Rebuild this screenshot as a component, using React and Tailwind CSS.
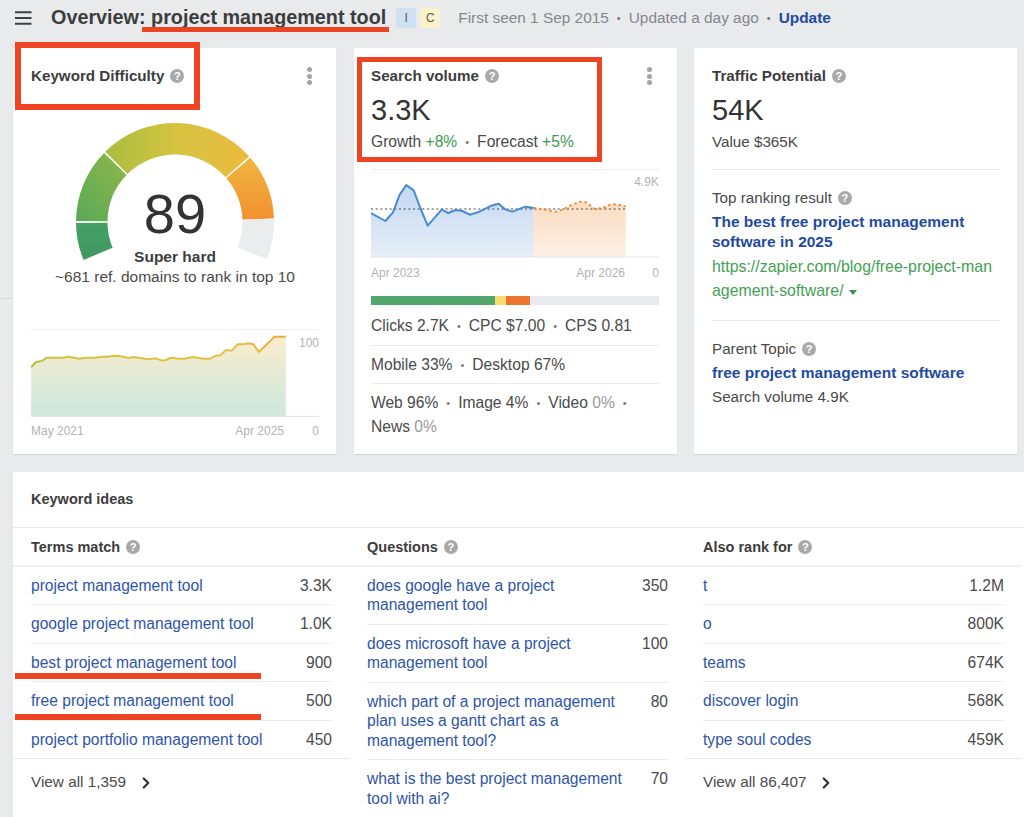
import React from 'react'
import { ChevronRight } from 'lucide-react'

// --- small bits ---

const Help = () => (
  <span className="inline-flex w-[14px] h-[14px] rounded-full bg-[#a9a9a9] text-white text-[11px] font-bold items-center justify-center leading-none shrink-0">?</span>
)

const Dots = () => (
  <div className="flex flex-col gap-[1.5px] mr-[7px]">
    <div className="w-[5px] h-[5px] rounded-full bg-[#a3a3a3]" />
    <div className="w-[5px] h-[5px] rounded-full bg-[#a3a3a3]" />
    <div className="w-[5px] h-[5px] rounded-full bg-[#a3a3a3]" />
  </div>
)

const Sep = () => <span className="mx-[8px] text-[#777] text-[11px] align-[1px]">•</span>

const Title = ({ children, menu }) => (
  <div className="flex items-center justify-between h-5">
    <div className="flex items-center gap-[6px] text-[15.2px] font-bold text-[#3d3d3d]">
      {children}
      <Help />
    </div>
    {menu && <Dots />}
  </div>
)

// --- gauge ---

const polar = (r, deg) => {
  const a = (deg * Math.PI) / 180
  return [100 + r * Math.cos(a), 103 - r * Math.sin(a)]
}

const arc = (from, to, R = 99, r = 67.5) => {
  const [x1, y1] = polar(R, from)
  const [x2, y2] = polar(R, to)
  const [x3, y3] = polar(r, to)
  const [x4, y4] = polar(r, from)
  return `M${x1} ${y1} A${R} ${R} 0 0 1 ${x2} ${y2} L${x3} ${y3} A${r} ${r} 0 0 0 ${x4} ${y4} Z`
}

const Gauge = () => (
  <svg width="200" height="150" viewBox="0 0 200 150" className="block">
    <defs>
      <linearGradient id="g1" x1="0" y1="1" x2="0" y2="0">
        <stop offset="0" stopColor="#3f9a62" />
        <stop offset="1" stopColor="#44a063" />
      </linearGradient>
      <linearGradient id="g2" x1="0" y1="1" x2="1" y2="0">
        <stop offset="0" stopColor="#5aa957" />
        <stop offset="1" stopColor="#8fb74a" />
      </linearGradient>
      <linearGradient id="g3" x1="0" y1="0" x2="1" y2="0">
        <stop offset="0" stopColor="#a9bd3f" />
        <stop offset="0.5" stopColor="#d6c440" />
        <stop offset="1" stopColor="#ecbb40" />
      </linearGradient>
      <linearGradient id="g4" x1="0" y1="0" x2="0" y2="1">
        <stop offset="0" stopColor="#efb53f" />
        <stop offset="1" stopColor="#f29130" />
      </linearGradient>
    </defs>
    <path d={arc(202.5, 180.6)} fill="url(#g1)" />
    <path d={arc(179.4, 135.8)} fill="url(#g2)" />
    <path d={arc(134.8, 41.5)} fill="url(#g3)" />
    <path d={arc(40.5, 2)} fill="url(#g4)" />
    <path d={arc(2, -22)} fill="#ebecee" />
  </svg>
)

// --- charts ---

const kdPoints = '93,229 108,214 125,211 140,201 190,201 205,198 238,204 255,201 285,201 305,198 325,198 340,195 358,196 385,202 400,199 445,206 467,203 485,210 497,208 513,201 535,204 552,204 578,199 610,204 630,204 645,196 660,194 678,178 695,180 712,161 730,161 745,158 760,161 776,184 823,138 857,138'

const KdChart = () => (
  <svg width="288" height="88" viewBox="93 115 863 264" className="block">
    <defs>
      <linearGradient id="kdArea" x1="0" y1="0" x2="0" y2="1">
        <stop offset="0" stopColor="#fbedcc" />
        <stop offset="0.85" stopColor="#d2e8dc" />
        <stop offset="1" stopColor="#d2e8dc" />
      </linearGradient>
      <linearGradient id="kdLine" gradientUnits="userSpaceOnUse" x1="93" y1="0" x2="857" y2="0">
        <stop offset="0" stopColor="#aebd3e" />
        <stop offset="0.1" stopColor="#d5c240" />
        <stop offset="0.8" stopColor="#e6c03f" />
        <stop offset="1" stopColor="#f3aa3c" />
      </linearGradient>
    </defs>
    <line x1="93" y1="116" x2="956" y2="116" stroke="#ececec" strokeWidth="3" />
    <polygon points={`${kdPoints} 857,377 93,377`} fill="url(#kdArea)" />
    <line x1="93" y1="377" x2="956" y2="377" stroke="#dfe3e2" strokeWidth="3" />
    <polyline points={kdPoints} fill="none" stroke="url(#kdLine)" strokeWidth="6" strokeLinejoin="round" />
  </svg>
)

const volPoints = '64,640 107,664 130,638 150,585 170,556 192,572 212,625 234,678 276,630 296,640 318,631 338,634 360,645 385,638 425,618 447,612 468,630 488,636 527,621 552,625'
const forecastPoints = '552,625 590,630 615,637 640,630 665,616 690,606 710,608 735,628 760,625 780,615 800,614 828,620'

const VolChart = () => (
  <svg width="288" height="89" viewBox="64 508 864 267" className="block">
    <defs>
      <linearGradient id="volArea" x1="0" y1="0" x2="0" y2="1">
        <stop offset="0" stopColor="#c3d7f0" />
        <stop offset="1" stopColor="#e6eff9" />
      </linearGradient>
      <linearGradient id="foreArea" x1="0" y1="0" x2="0" y2="1">
        <stop offset="0" stopColor="#fbdcc0" />
        <stop offset="1" stopColor="#fdf0e5" />
      </linearGradient>
    </defs>
    <line x1="64" y1="509" x2="928" y2="509" stroke="#ececec" strokeWidth="3" />
    <polygon points={`${volPoints} 552,772 64,772`} fill="url(#volArea)" />
    <polygon points={`${forecastPoints} 828,772 552,772`} fill="url(#foreArea)" />
    <line x1="64" y1="772" x2="928" y2="772" stroke="#dfe3ea" strokeWidth="3" />
    <line x1="64" y1="628" x2="828" y2="628" stroke="#444" strokeWidth="3" strokeDasharray="6 8" />
    <polyline points={volPoints} fill="none" stroke="#4a8ad4" strokeWidth="6" strokeLinejoin="round" />
    <polyline points={forecastPoints} fill="none" stroke="#f0923a" strokeWidth="6" strokeDasharray="8 8" />
  </svg>
)

// --- top cards ---

const DifficultyCard = () => (
  <div className="w-[323px] h-[406px] bg-white shadow-[0_1px_1px_rgba(0,0,0,0.08)] pl-[18px] pr-[17px] pt-[18px] relative">
    <Title menu>Keyword Difficulty</Title>
    <div className="relative h-[175px] mt-[33px] flex justify-center">
      <Gauge />
      <div className="absolute inset-x-0 top-[58px] text-center text-[56px] leading-[74px] text-[#333]">89</div>
      <div className="absolute inset-x-0 top-[128px] text-center text-[15.5px] leading-5 font-bold text-[#3d3d3d]">Super hard</div>
      <div className="absolute inset-x-0 top-[148px] text-center text-[15.5px] leading-5 text-[#4a4a4a]">~681 ref. domains to rank in top 10</div>
    </div>
    <div className="relative mt-[35px]">
      <KdChart />
      <span className="absolute right-0 top-[6px] text-[12px] leading-4 text-[#b3b3b3]">100</span>
    </div>
    <div className="flex justify-between text-[12px] leading-4 text-[#b3b3b3] mt-[6px]">
      <div className="flex justify-between w-[253px]">
        <span>May 2021</span>
        <span>Apr 2025</span>
      </div>
      <span>0</span>
    </div>
  </div>
)

const VolumeCard = () => (
  <div className="w-[323px] h-[406px] bg-white shadow-[0_1px_1px_rgba(0,0,0,0.08)] pl-[17px] pr-[18px] pt-[18px] relative text-[15.6px] text-[#4a4a4a]">
    <Title menu>Search volume</Title>
    <div className="text-[29px] leading-9 text-[#333] mt-[6px]">3.3K</div>
    <div className="leading-5 mt-[4px]">
      Growth <span className="text-[#3f9a55]">+8%</span><Sep />Forecast <span className="text-[#3f9a55]">+5%</span>
    </div>
    <div className="relative mt-[17px]">
      <VolChart />
      <span className="absolute right-0 top-[5px] text-[12px] leading-4 text-[#b3b3b3]">4.9K</span>
    </div>
    <div className="flex justify-between text-[12px] leading-4 text-[#b3b3b3] mt-[7px]">
      <div className="flex justify-between w-[254px]">
        <span>Apr 2023</span>
        <span>Apr 2026</span>
      </div>
      <span>0</span>
    </div>
    <div className="flex h-[9px] mt-[15px] bg-[#e9eaec]">
      <div className="w-[124px] bg-[#52a66c]" />
      <div className="w-[11px] bg-[#f6dd72]" />
      <div className="w-[24px] bg-[#ec7530]" />
    </div>
    <div className="leading-5 mt-[11px] pb-[9px] border-b border-[#ebebeb]">
      Clicks 2.7K<Sep />CPC $7.00<Sep />CPS 0.81
    </div>
    <div className="leading-5 pt-[9px] pb-[8px] border-b border-[#ebebeb]">
      Mobile 33%<Sep />Desktop 67%
    </div>
    <div className="leading-6 pt-[7px]">
      Web 96%<Sep />Image 4%<Sep />Video <span className="text-[#999]">0%</span><Sep /><br />
      News <span className="text-[#999]">0%</span>
    </div>
  </div>
)

const PotentialCard = () => (
  <div className="w-[323px] h-[406px] bg-white shadow-[0_1px_1px_rgba(0,0,0,0.08)] pl-[18px] pr-[17px] pt-[18px] text-[15.2px] text-[#4a4a4a]">
    <Title>Traffic Potential</Title>
    <div className="text-[29px] leading-9 text-[#333] mt-[6px]">54K</div>
    <div className="leading-5 mt-[4px] pb-[17px] border-b border-[#ebebeb]">Value $365K</div>
    <div className="flex items-center gap-[6px] leading-5 mt-[18px]">Top ranking result <Help /></div>
    <div className="text-[15.5px] font-bold text-[#1f4ba0] leading-[19.5px] mt-[4px]">The best free project management software in 2025</div>
    <div className="text-[15.9px] leading-6 mt-[4px] pb-[17px] text-[#45a056] border-b border-[#ebebeb] whitespace-nowrap">
      https://zapier.com/blog/free-project-man<br />agement-software/
      <span className="inline-block ml-[5px] align-[1px] w-0 h-0 border-x-[4px] border-x-transparent border-t-[5px] border-t-[#3f8f4f]" />
    </div>
    <div className="flex items-center gap-[6px] leading-5 mt-[18px]">Parent Topic <Help /></div>
    <div className="text-[15.5px] font-bold text-[#1f4ba0] leading-6 mt-[2px]">free project management software</div>
    <div className="leading-6">Search volume 4.9K</div>
  </div>
)

// --- keyword ideas ---

const Row = ({ text, value, last }) => (
  <div className={`flex justify-between gap-4 py-[9px] leading-[19.5px] ${last ? '' : 'border-b border-[#ebebeb]'}`}>
    <a className="text-[#2f55a8]">{text}</a>
    <span className="text-[#4a4a4a] shrink-0">{value}</span>
  </div>
)

const Column = ({ title, rows, more, className }) => (
  <div className={`flex flex-col ${className}`}>
    <div className="-mx-[18px] px-[18px] h-[38.75px] pt-[2px] flex items-center gap-[6px] font-bold text-[14.5px] text-[#3d3d3d] border-b-2 border-[#f0f1f2]">
      {title} <Help />
    </div>
    {rows.map((r, i) => (
      <Row key={i} text={r[0]} value={r[1]} last={more && i === rows.length - 1} />
    ))}
    {more && (
      <div className="-mx-[18px] px-[18px] h-[48px] flex items-center gap-[11px] border-t border-[#ebebeb] text-[15.3px] text-[#4a4a4a]">
        {more}
        <ChevronRight size={18} strokeWidth={3} className="text-[#333]" />
      </div>
    )}
  </div>
)

const terms = [
  ['project management tool', '3.3K'],
  ['google project management tool', '1.0K'],
  ['best project management tool', '900'],
  ['free project management tool', '500'],
  ['project portfolio management tool', '450'],
]

const questions = [
  ['does google have a project management tool', '350'],
  ['does microsoft have a project management tool', '100'],
  ['which part of a project management plan uses a gantt chart as a management tool?', '80'],
  ['what is the best project management tool with ai?', '70'],
]

const alsoRank = [
  ['t', '1.2M'],
  ['o', '800K'],
  ['teams', '674K'],
  ['discover login', '568K'],
  ['type soul codes', '459K'],
]

const KeywordIdeas = () => (
  <div className="ml-[13px] mt-[18px] bg-white text-[15.6px] flex-1 min-h-0 overflow-hidden">
    <div className="pl-[18px] pt-[17px] pb-[18px] h-[56px] leading-5 text-[14.5px] font-bold text-[#3d3d3d] border-b border-[#ebebeb]">Keyword ideas</div>
    <div className="flex">
      <Column title="Terms match" rows={terms} more="View all 1,359" className="w-[336px] pl-[18px] pr-[17px]" />
      <Column title="Questions" rows={questions} className="w-[337px] pl-[18px] pr-[18px]" />
      <Column title="Also rank for" rows={alsoRank} more="View all 86,407" className="w-[338px] pl-[17px] pr-[20px]" />
    </div>
  </div>
)

// --- page ---

export default function App() {
  return (
    <div className="relative w-[1024px] h-[817px] overflow-hidden bg-[#e9eaec] flex flex-col font-['Liberation_Sans',Arial,sans-serif]">
      <div className="absolute left-0 top-[298px] w-[13px] h-px bg-[#d8d9dc]" />

      {/* header */}
      <div className="h-[48px] shrink-0 flex items-center pl-[15px] pb-[12px]">
        <svg width="17" height="14" viewBox="0 0 17 14" className="shrink-0">
          <path d="M0 1.2h16.5M0 7h16.5M0 12.8h16.5" stroke="#3f3f3f" strokeWidth="2" />
        </svg>
        <div className="ml-[19px] text-[19.8px] font-bold text-[#3d3d3d] whitespace-nowrap">Overview: project management tool</div>
        <div className="ml-[10px] mb-[1px] w-[20px] h-[20px] rounded-[3px] bg-[#cfe0f3] text-[#555] text-[12px] flex items-center justify-center">I</div>
        <div className="ml-[4px] mb-[1px] w-[20px] h-[20px] rounded-[3px] bg-[#fbf2c9] text-[#555] text-[12px] flex items-center justify-center">C</div>
        <div className="ml-[18px] text-[15.4px] text-[#85888c] whitespace-nowrap">
          First seen 1 Sep 2015<Sep />Updated a day ago<Sep /><span className="font-bold text-[#1f4ba0]">Update</span>
        </div>
      </div>

      {/* top cards */}
      <div className="flex ml-[13px] shrink-0">
        <DifficultyCard />
        <div className="w-[18px]" />
        <VolumeCard />
        <div className="w-[17px]" />
        <PotentialCard />
      </div>

      <KeywordIdeas />

      {/* red annotations on top of the screenshot */}
      <div className="absolute left-[15px] top-[42px] w-[185px] h-[68px] border-[6px] border-[#ee4423]" />
      <div className="absolute left-[357px] top-[57px] w-[245px] h-[105px] border-[5px] border-[#ee4423]" />
      <div className="absolute left-[142px] top-[27px] w-[247px] h-[5px] bg-[#ee4423]" />
      <div className="absolute left-[15px] top-[673px] w-[246px] h-[6px] bg-[#ee4423]" />
      <div className="absolute left-[15px] top-[714px] w-[246px] h-[6px] bg-[#ee4423]" />
    </div>
  )
}
